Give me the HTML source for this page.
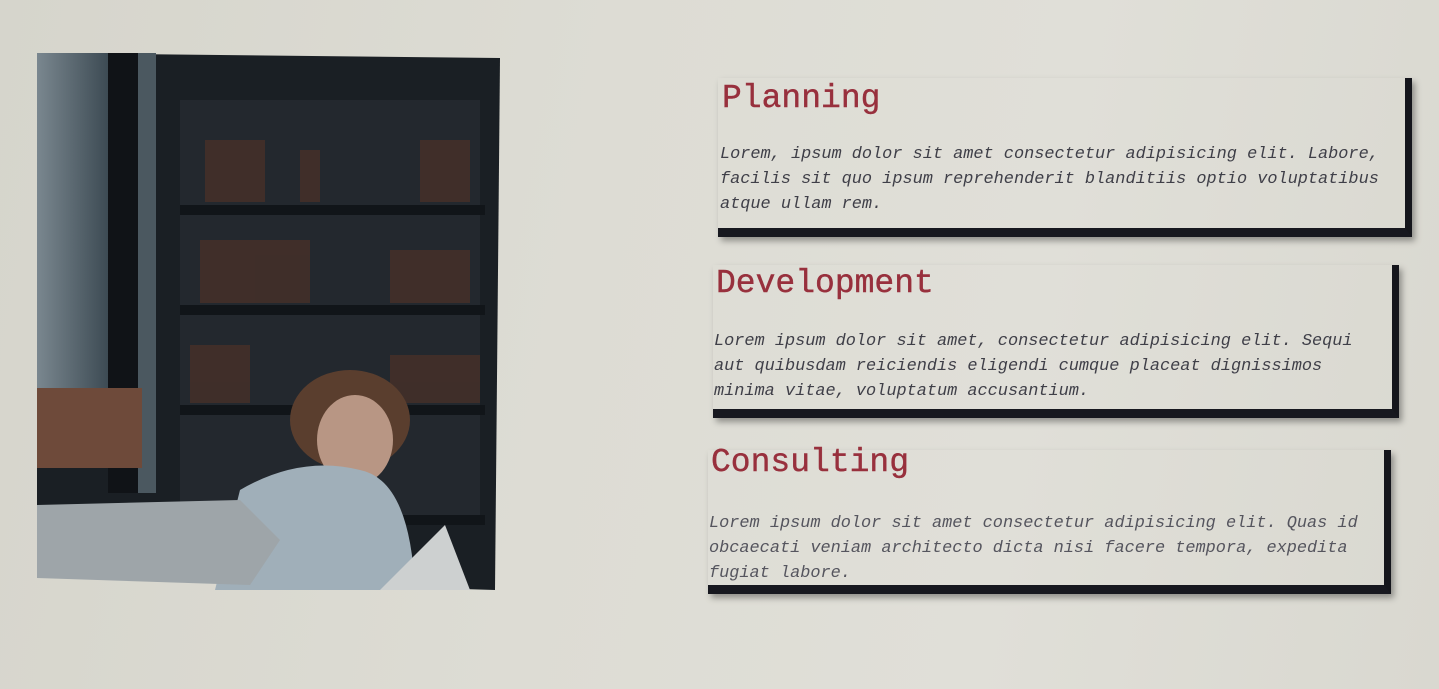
<!DOCTYPE html>
<html><head><style>
body{margin:0;width:1439px;height:689px;overflow:hidden;background:linear-gradient(100deg,#d6d5cc 0%,#dddcd4 40%,#e0dfd8 70%,#d9d8d0 100%);font-family:"Liberation Mono",monospace;position:relative}
.card{position:absolute;border-right:7px solid #15161c;border-bottom:9px solid #17181f;box-shadow:3px 4px 6px rgba(0,0,0,.35)}
.t{position:absolute;color:#98303d;font-size:33px;white-space:nowrap;-webkit-text-stroke:.4px #98303d}
.p{position:absolute;color:#3f3f48;font-size:16.9px;font-style:italic;line-height:25px;white-space:nowrap}
</style></head><body>
<svg style="position:absolute;left:0;top:0" width="1439" height="689">
<defs><linearGradient id="w" x1="0" x2="1"><stop offset="0" stop-color="#7a878f"/><stop offset="1" stop-color="#3c4a53"/></linearGradient></defs>
<polygon points="37,53 500,58 495,590 37,576" fill="#1a1f24"/>
<rect x="37" y="53" width="72" height="340" fill="url(#w)"/>
<rect x="108" y="53" width="30" height="440" fill="#101317"/>
<rect x="138" y="53" width="18" height="440" fill="#4b5860"/>
<rect x="180" y="100" width="300" height="420" fill="#23282e"/>
<g fill="#111519"><rect x="180" y="205" width="305" height="10"/><rect x="180" y="305" width="305" height="10"/><rect x="180" y="405" width="305" height="10"/><rect x="180" y="515" width="305" height="10"/></g>
<g fill="#4a3028" opacity=".75"><rect x="205" y="140" width="60" height="62"/><rect x="300" y="150" width="20" height="52"/><rect x="420" y="140" width="50" height="62"/><rect x="200" y="240" width="110" height="63"/><rect x="390" y="250" width="80" height="53"/><rect x="190" y="345" width="60" height="58"/><rect x="390" y="355" width="90" height="48"/></g>
<rect x="37" y="388" width="105" height="80" fill="#6e4a3a"/>
<ellipse cx="350" cy="420" rx="60" ry="50" fill="#5a3e2e"/>
<ellipse cx="355" cy="440" rx="38" ry="45" fill="#b89684"/>
<path d="M215,590 L240,490 Q300,455 360,470 Q410,480 415,590Z" fill="#a0afb9"/>
<path d="M37,505 L240,500 L280,540 L250,585 L37,578Z" fill="#9ea5a9"/>
<path d="M380,590 L445,525 L470,590Z" fill="#cdd0d0"/>
</svg>
<div class="card" style="left:718px;top:78px;width:687px;height:150px"></div>
<div class="card" style="left:713px;top:265px;width:679px;height:144px"></div>
<div class="card" style="left:708px;top:450px;width:676px;height:135px"></div>
<div class="t" style="left:722px;top:80px">Planning</div>
<div class="p" style="left:720px;top:142px">Lorem, ipsum dolor sit amet consectetur adipisicing elit. Labore,<br>facilis sit quo ipsum reprehenderit blanditiis optio voluptatibus<br>atque ullam rem.</div>
<div class="t" style="left:716px;top:265px">Development</div>
<div class="p" style="left:714px;top:329px">Lorem ipsum dolor sit amet, consectetur adipisicing elit. Sequi<br>aut quibusdam reiciendis eligendi cumque placeat dignissimos<br>minima vitae, voluptatum accusantium.</div>
<div class="t" style="left:711px;top:444px">Consulting</div>
<div class="p" style="left:709px;top:511px;color:#55555e">Lorem ipsum dolor sit amet consectetur adipisicing elit. Quas id<br>obcaecati veniam architecto dicta nisi facere tempora, expedita<br>fugiat labore.</div>
</body></html>
